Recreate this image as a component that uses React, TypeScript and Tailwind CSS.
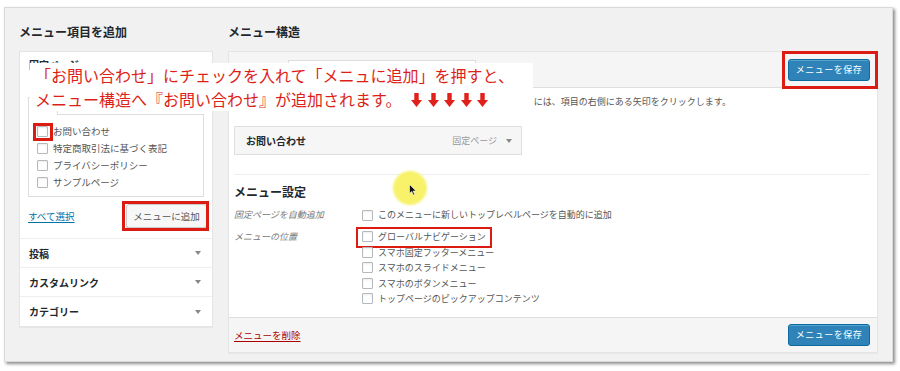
import React from "react";

function Box() {
  return (
    <span className="inline-block h-[11px] w-[11px] shrink-0 rounded-[1px] border border-[#b4b9be] bg-white shadow-[inset_0_1px_2px_rgba(0,0,0,0.08)]" />
  );
}

function Tri() {
  return (
    <svg width="6" height="4" viewBox="0 0 6 4" className="shrink-0">
      <path d="M0 0h6L3 4z" fill="#888" />
    </svg>
  );
}

function DownArrow() {
  return (
    <svg width="11" height="14" viewBox="0 0 11 14" className="shrink-0">
      <path d="M3.3 0h4.4v7h3.3L5.5 14 0 7h3.3z" fill="#e0201a" />
    </svg>
  );
}

function BlueButton() {
  return (
    <button
      type="button"
      className="h-[22px] w-[82px] rounded-[3px] border border-[#0d6a9c] bg-[#2f83b8] text-[9px] tracking-[0.5px] text-white shadow-[inset_0_1px_0_rgba(120,200,230,0.5)]"
    >
      メニューを保存
    </button>
  );
}

const pages = ["お問い合わせ", "特定商取引法に基づく表記", "プライバシーポリシー", "サンプルページ"];
const locations = [
  "グローバルナビゲーション",
  "スマホ固定フッターメニュー",
  "スマホのスライドメニュー",
  "スマホのボタンメニュー",
  "トップページのピックアップコンテンツ"
];

export default function App() {
  return (
    <div className="relative h-[371px] w-[900px] overflow-hidden bg-white pl-[4px] pt-[7px] font-['Noto_Sans_CJK_JP',sans-serif] text-[#444]">
      <div className="flex h-[355px] w-[889px] gap-[15px] border border-[#d9d9d9] bg-[#f1f1f1] px-[14px] pt-[16px] shadow-[2px_2px_3px_rgba(0,0,0,0.45)]">
        {/* left column */}
        <div className="flex w-[194px] flex-col">
          <h2 className="h-[16px] text-[12px] font-bold leading-[16px] text-[#23282d]">メニュー項目を追加</h2>
          <div className="mt-[11px] border border-[#e5e5e5] bg-white shadow-[0_1px_1px_rgba(0,0,0,0.04)]">
            <div className="border-b border-[#eee] pb-[10px]">
              <div className="flex h-[45px] items-start justify-between px-[9px] pt-[6px]">
                <span className="text-[10px] font-bold leading-[14px] text-[#23282d]">固定ページ</span>
              </div>
              <div className="mx-[8px] flex h-[18px] text-[9px]">
                <div className="w-[30px] border-l border-r border-t border-[#ddd] bg-white px-[3px] leading-[16px]">最近</div>
                <div className="flex-1 border-b border-[#ddd]" />
              </div>
              <div className="mx-[8px] h-[82px] border-b border-l border-r border-[#ddd] pl-[8px] pt-[8px]">
                {pages.map((p, i) => (
                  <div key={p} className="relative flex h-[17px] items-center gap-[5px] text-[9.5px] text-[#555]">
                    <span className="relative flex">
                      <Box />
                      {i === 0 ? (
                        <span className="absolute left-[-4px] top-[-3px] h-[18px] w-[20px] border-[3px] border-[#dc1c13]" />
                      ) : null}
                    </span>
                    <span>{p}</span>
                  </div>
                ))}
              </div>
              <div className="mt-[7px] flex h-[24px] items-center justify-between pl-[8px] pr-[5px]">
                <a className="text-[9.5px] text-[#0073aa] underline underline-offset-2">すべて選択</a>
                <span className="relative flex">
                  <button
                    type="button"
                    className="h-[24px] w-[81px] rounded-[3px] border border-[#ccc] bg-[#f7f7f7] text-[9.5px] text-[#555] shadow-[0_1px_0_#ccc]"
                  >
                    メニューに追加
                  </button>
                  <span className="absolute bottom-[-3px] left-[-4px] right-[-2px] top-[-3px] border-[3px] border-[#dc1c13]" />
                </span>
              </div>
            </div>
            {["投稿", "カスタムリンク", "カテゴリー"].map((s, i) => (
              <div
                key={s}
                className={`flex h-[29px] items-center justify-between pl-[9px] pr-[11px] ${i < 2 ? "border-b border-[#eee]" : ""}`}
              >
                <span className="text-[10px] font-bold text-[#23282d]">{s}</span>
                <Tri />
              </div>
            ))}
          </div>
        </div>

        {/* right column */}
        <div className="flex w-[650px] flex-col">
          <h2 className="h-[16px] text-[12px] font-bold leading-[16px] text-[#23282d]">メニュー構造</h2>
          <div className="mt-[11px] border border-[#e5e5e5] bg-white shadow-[0_1px_1px_rgba(0,0,0,0.04)]">
            <div className="flex h-[36px] items-center border-b border-[#dfdfdf] bg-[#f5f5f5] pl-[11px] pr-[7px]">
              <span className="text-[9px] text-[#555]">メニュー名</span>
              <span className="ml-[3px] mt-[3px] h-[22px] w-[188px] border border-[#ddd] bg-white" />
              <span className="relative ml-auto flex">
                <BlueButton />
                <span className="absolute bottom-[-8px] left-[-6px] right-[-8px] top-[-8px] border-[3px] border-[#dc1c13]" />
              </span>
            </div>
            <div className="h-[229px] pl-[5px] pr-[7px] pt-[7px]">
              <p className="whitespace-nowrap pl-[13px] text-[9px] leading-[14px] text-[#555]">
                項目はドラッグで並べ替えできます。追加の設定オプションを表示するには、項目の右側にある矢印をクリックします。
              </p>
              <div className="mt-[17px] flex h-[29px] w-[288px] items-center border border-[#dfdfdf] bg-[#f6f6f6] pl-[11px] pr-[9px]">
                <span className="text-[10px] font-bold text-[#23282d]">お問い合わせ</span>
                <span className="ml-auto mr-[9px] text-[9px] text-[#999]">固定ページ</span>
                <Tri />
              </div>
              <div className="mt-[19px] border-t border-[#eee]" />
              <h3 className="mt-[9px] h-[16px] text-[12px] font-bold leading-[16px] text-[#23282d]">メニュー設定</h3>
              <div className="mt-[7px] flex h-[16px] items-center text-[9px]">
                <span className="w-[128px] italic text-[#777]">固定ページを自動追加</span>
                <span className="flex items-center gap-[5px] text-[#555]">
                  <Box />
                  このメニューに新しいトップレベルページを自動的に追加
                </span>
              </div>
              <div className="mt-[6px] flex text-[9px]">
                <span className="flex h-[15.5px] w-[128px] items-center italic text-[#777]">メニューの位置</span>
                <div className="flex flex-col">
                  {locations.map((l, i) => (
                    <div key={l} className="relative flex h-[15.5px] items-center gap-[5px] text-[#555]">
                      <Box />
                      <span>{l}</span>
                      {i === 0 ? (
                        <span className="absolute left-[-6px] top-[-2px] h-[21px] w-[136px] border-2 border-[#dc1c13]" />
                      ) : null}
                    </div>
                  ))}
                </div>
              </div>
            </div>
            <div className="flex h-[35px] items-center justify-between border-t border-[#dfdfdf] bg-[#f5f5f5] pl-[5px] pr-[7px]">
              <a className="text-[9.5px] text-[#a00] underline underline-offset-2">メニューを削除</a>
              <BlueButton />
            </div>
          </div>
        </div>
      </div>

      {/* caption overlay */}
      <div className="absolute left-[30px] top-[63px] w-[503px] bg-white pl-[5px] text-[16px] leading-[25px] text-[#dd1f18]">
        <div className="h-[25px] whitespace-nowrap">「お問い合わせ」にチェックを入れて「メニュに追加」を押すと、</div>
        <div className="flex h-[23px] items-center gap-[10px] whitespace-nowrap">
          <span>メニュー構造へ『お問い合わせ』が追加されます。</span>
          <span className="flex gap-[5.5px]">
            <DownArrow />
            <DownArrow />
            <DownArrow />
            <DownArrow />
            <DownArrow />
          </span>
        </div>
      </div>

      {/* cursor highlight */}
      <div className="absolute left-[393px] top-[171px] h-[34px] w-[34px] rounded-full bg-[#f7f26a] blur-[1px]" />
      <svg className="absolute left-[409px] top-[184px]" width="8" height="12" viewBox="0 0 8 12">
        <path d="M0.5 0.5v9l2.2-2 1.6 3.6 1.4-.6-1.6-3.5h3z" fill="#111" stroke="#fff" strokeWidth="0.6" />
      </svg>
    </div>
  );
}
